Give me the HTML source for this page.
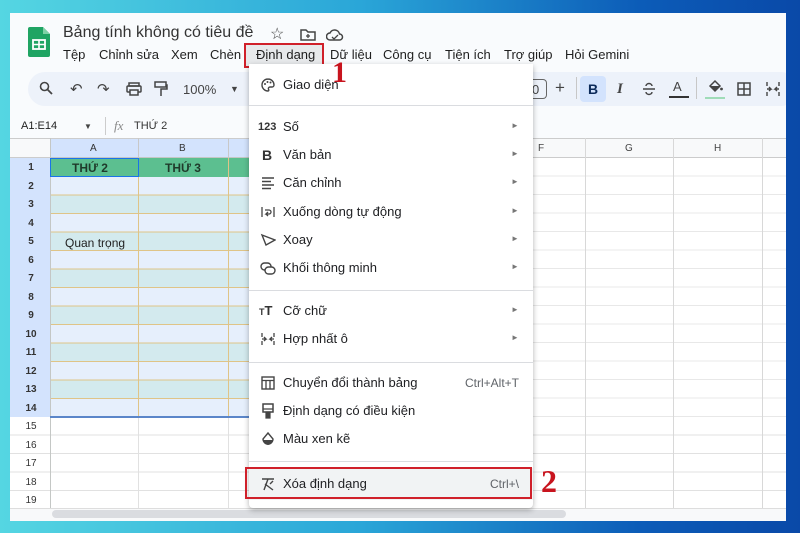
<!DOCTYPE html>
<html><head><meta charset="utf-8"><style>
*{margin:0;padding:0;box-sizing:border-box}
body{width:800px;height:533px;overflow:hidden;position:relative;font-family:"Liberation Sans",Arial,sans-serif;background:linear-gradient(90deg,#55d6e2 0%,#2aa6d8 45%,#0c5cb8 80%,#0a49a8 100%)}
.win{position:absolute;left:10px;top:13px;width:776px;height:508px;background:#f9fbfd;overflow:hidden}
.a{position:absolute}
.t{position:absolute;white-space:nowrap;color:#202124}
.mi{position:absolute;left:0;width:284px;height:28px;font-size:13px;color:#202124}
.mi .ic{position:absolute;left:11px;top:6px;width:16px;height:16px}
.mi .lb{position:absolute;left:34px;top:6px}
.mi .ar{position:absolute;left:262px;top:8px;font-size:8px;color:#777}
.mi .sc{position:absolute;right:14px;top:7px;font-size:12px;color:#5f6368}
.sep{position:absolute;left:0;width:284px;height:1px;background:#dadce0}
.rh{position:absolute;left:2px;width:38px;font-size:10px;font-weight:bold;text-align:center;color:#333}
</style></head><body>
<div class="win">
<svg class="a" style="left:18px;top:14px" width="22" height="30" viewBox="0 0 22 30"><path d="M2 0h13l7 7v21a2 2 0 0 1-2 2H2a2 2 0 0 1-2-2V2a2 2 0 0 1 2-2z" fill="#1fa463"/><path d="M15 0v7h7z" fill="#7fd1a6"/><rect x="5" y="13" width="12" height="9" fill="none" stroke="#fff" stroke-width="1.8"/><path d="M5 17.5h12M11 13v9" stroke="#fff" stroke-width="1.6"/></svg>
<div class="t" style="left:53px;top:11px;font-size:16px;color:#333">Bảng tính không có tiêu đề</div>
<div class="t" style="left:260px;top:11px;font-size:16px;color:#444">☆</div>
<svg class="a" style="left:290px;top:15px" width="16" height="13"><path d="M1 2h5l2 2h7v8H1z" fill="none" stroke="#444" stroke-width="1.5"/><path d="M8 6v4M6 8h4" stroke="#444" stroke-width="1.3"/></svg>
<svg class="a" style="left:316px;top:15px" width="18" height="13"><path d="M4 12a3.5 3.5 0 0 1 0-7 5 5 0 0 1 9.5 1 3 3 0 0 1 0 6z" fill="none" stroke="#444" stroke-width="1.5"/><path d="M6 9l2 2 4-4" fill="none" stroke="#444" stroke-width="1.3"/></svg>
<div class="t" style="left:53px;top:34px;font-size:13px;color:#1f1f1f">
<span class="a" style="left:0">Tệp</span><span class="a" style="left:36px">Chỉnh sửa</span><span class="a" style="left:108px">Xem</span><span class="a" style="left:147px">Chèn</span><span class="a" style="left:193px">Định dạng</span><span class="a" style="left:267px">Dữ liệu</span><span class="a" style="left:320px">Công cụ</span><span class="a" style="left:382px">Tiện ích</span><span class="a" style="left:441px">Trợ giúp</span><span class="a" style="left:502px">Hỏi Gemini</span></div>
<div class="a" style="left:236px;top:31px;width:76px;height:24px;background:rgba(0,0,0,.07)"></div>
<div class="a" style="left:234px;top:30px;width:80px;height:25px;border:2px solid #d0202a"></div>
<div class="a" style="left:18px;top:59px;width:770px;height:34px;border-radius:17px;background:#edf2fa"></div>
<svg class="a" style="left:29px;top:68px" width="14" height="14"><circle cx="5.5" cy="5.5" r="4" fill="none" stroke="#444" stroke-width="1.6"/><path d="M8.5 8.5l4.5 4.5" stroke="#444" stroke-width="1.8"/></svg>
<div class="t" style="left:60px;top:67px;font-size:15px;color:#444">↶</div>
<div class="t" style="left:87px;top:67px;font-size:15px;color:#444">↷</div>
<svg class="a" style="left:116px;top:69px" width="16" height="14"><rect x="3" y="1" width="10" height="3" fill="none" stroke="#444" stroke-width="1.5"/><rect x="1" y="4" width="14" height="6" rx="1" fill="none" stroke="#444" stroke-width="1.5"/><rect x="4" y="8" width="8" height="5" fill="#edf2fa" stroke="#444" stroke-width="1.5"/></svg>
<svg class="a" style="left:144px;top:68px" width="14" height="16"><rect x="1" y="1" width="11" height="5" fill="none" stroke="#444" stroke-width="1.5"/><path d="M12 4h1v4H7v7" fill="none" stroke="#444" stroke-width="1.5"/></svg>
<div class="t" style="left:173px;top:69px;font-size:13px;color:#444">100%</div>
<div class="t" style="left:220px;top:71px;font-size:9px;color:#444">▼</div>
<div class="a" style="left:520px;top:66px;width:17px;height:20px;border:1px solid #666;border-left:none;border-radius:0 4px 4px 0"></div>
<div class="t" style="left:522px;top:69px;font-size:13px;color:#444">0</div>
<div class="t" style="left:545px;top:65px;font-size:17px;color:#444">+</div>
<div class="a" style="left:566px;top:64px;width:1px;height:22px;background:#c7c7c7"></div>
<div class="a" style="left:570px;top:63px;width:26px;height:26px;border-radius:4px;background:#d3e3fd"></div>
<div class="t" style="left:578px;top:68px;font-size:14px;font-weight:bold;color:#0b2a5a">B</div>
<div class="t" style="left:607px;top:68px;font-size:15px;font-style:italic;font-family:'Liberation Serif',serif;font-weight:bold;color:#444">I</div>
<svg class="a" style="left:632px;top:69px" width="14" height="14"><path d="M1 7h12M4 4a3 2.5 0 0 1 6 0M4 10a3 2.5 0 0 0 6 0" fill="none" stroke="#444" stroke-width="1.4"/></svg>
<div class="t" style="left:663px;top:66px;font-size:13px;color:#444">A</div>
<div class="a" style="left:659px;top:83px;width:20px;height:2px;background:#333"></div>
<div class="a" style="left:686px;top:64px;width:1px;height:22px;background:#c7c7c7"></div>
<svg class="a" style="left:697px;top:66px" width="16" height="14"><path d="M3 7l5-5 5 5-5 5z" fill="none" stroke="#444" stroke-width="1.5"/><path d="M3 7h10l-5 5z" fill="#444"/><circle cx="14.5" cy="10" r="1.4" fill="#444"/></svg>
<div class="a" style="left:695px;top:84px;width:20px;height:2px;background:#9fdcb8"></div>
<svg class="a" style="left:727px;top:69px" width="14" height="14"><rect x="1" y="1" width="12" height="12" fill="none" stroke="#444" stroke-width="1.5"/><path d="M7 1v12M1 7h12" stroke="#444" stroke-width="1.5"/></svg>
<svg class="a" style="left:756px;top:68px" width="14" height="16"><path d="M1 1v4M1 11v4M13 1v4M13 11v4M1 8h4l-2-2M5 8l-2 2M13 8h-4l2-2M9 8l2 2" fill="none" stroke="#444" stroke-width="1.4"/></svg>
<div class="t" style="left:11px;top:107px;font-size:11px;color:#1f1f1f">A1:E14</div>
<div class="t" style="left:74px;top:109px;font-size:8px;color:#444">▼</div>
<div class="a" style="left:95px;top:104px;width:1px;height:18px;background:#ccc"></div>
<div class="t" style="left:104px;top:105px;font-size:13px;font-style:italic;font-family:'Liberation Serif',serif;color:#888">fx</div>
<div class="t" style="left:124px;top:107px;font-size:11px;color:#333">THỨ 2</div>
<div class="a" style="left:0;top:125px;width:776px;height:20px;background:#f8f9fa;border-top:1px solid #ccc;border-bottom:1px solid #ccc"></div>
<div class="a" style="left:40px;top:125px;width:445px;height:20px;background:#d3e3fd;border-top:1px solid #ccc;border-bottom:1px solid #c4c7c5"></div>
<div class="a" style="left:0;top:145px;width:40px;height:259px;background:#d3e3fd"></div>
<div class="a" style="left:0;top:404px;width:776px;height:104px;background:#fff;background-image:repeating-linear-gradient(180deg,transparent 0,transparent 17.5px,#e1e1e1 17.5px,#e1e1e1 18.5px)"></div>
<div class="a" style="left:40px;top:145px;width:445px;height:18.5px;background:#5cbf90"></div>
<div class="a" style="left:40px;top:163.5px;width:445px;height:240.5px;background:repeating-linear-gradient(180deg,#e6effc 0,#e6effc 17.5px,#dfc487 17.5px,#dfc487 18.5px,#d3eaee 18.5px,#d3eaee 36px,#dfc487 36px,#dfc487 37px)"></div>
<div class="a" style="left:485px;top:145px;width:291px;height:259px;background:#fff;background-image:repeating-linear-gradient(180deg,transparent 0,transparent 17.5px,#e8e8e8 17.5px,#e8e8e8 18.5px)"></div>
<div class="a" style="left:128px;top:145px;width:1px;height:259px;background:#dfc487"></div>
<div class="a" style="left:218px;top:145px;width:1px;height:259px;background:#dfc487"></div>
<div class="a" style="left:128px;top:125px;width:1px;height:20px;background:#c8c8c8"></div>
<div class="a" style="left:218px;top:125px;width:1px;height:20px;background:#c8c8c8"></div>
<div class="a" style="left:128px;top:404px;width:1px;height:104px;background:#e1e1e1"></div>
<div class="a" style="left:218px;top:404px;width:1px;height:104px;background:#e1e1e1"></div>
<div class="a" style="left:575px;top:125px;width:1px;height:383px;background:#d8d8d8"></div>
<div class="a" style="left:663px;top:125px;width:1px;height:383px;background:#d8d8d8"></div>
<div class="a" style="left:752px;top:125px;width:1px;height:383px;background:#d8d8d8"></div>
<div class="a" style="left:40px;top:125px;width:1px;height:383px;background:#c4c7c5"></div>
<div class="a" style="left:40px;top:145px;width:89px;height:19px;border:1.5px solid #1a73e8"></div>
<div class="a" style="left:40px;top:403px;width:445px;height:1.5px;background:#5b86c9"></div>
<div class="t" style="left:80px;top:130px;font-size:10px;color:#333">A</div>
<div class="t" style="left:169px;top:130px;font-size:10px;color:#333">B</div>
<div class="t" style="left:528px;top:130px;font-size:10px;color:#444">F</div>
<div class="t" style="left:615px;top:130px;font-size:10px;color:#444">G</div>
<div class="t" style="left:704px;top:130px;font-size:10px;color:#444">H</div>
<div class="t" style="left:62px;top:148px;font-size:12px;font-weight:bold;color:#1f3a2a">THỨ 2</div>
<div class="t" style="left:155px;top:148px;font-size:12px;font-weight:bold;color:#1f3a2a">THỨ 3</div>
<div class="t" style="left:55px;top:223px;font-size:12px;color:#222">Quan trọng</div>
<div class="rh" style="top:149px">1</div><div class="rh" style="top:168px">2</div><div class="rh" style="top:186px">3</div><div class="rh" style="top:205px">4</div><div class="rh" style="top:223px">5</div><div class="rh" style="top:242px">6</div><div class="rh" style="top:260px">7</div><div class="rh" style="top:279px">8</div><div class="rh" style="top:297px">9</div><div class="rh" style="top:316px">10</div><div class="rh" style="top:334px">11</div><div class="rh" style="top:353px">12</div><div class="rh" style="top:371px">13</div><div class="rh" style="top:390px">14</div>
<div class="rh" style="top:408px;font-weight:normal">15</div><div class="rh" style="top:427px;font-weight:normal">16</div><div class="rh" style="top:445px;font-weight:normal">17</div><div class="rh" style="top:464px;font-weight:normal">18</div><div class="rh" style="top:482px;font-weight:normal">19</div>
<div class="a" style="left:0;top:495px;width:776px;height:13px;background:#f8f9fa;border-top:1px solid #ddd"></div>
<div class="a" style="left:42px;top:497px;width:514px;height:8px;border-radius:4px;background:#dadce0"></div>
</div>
<div class="a" style="left:249px;top:64px;width:284px;height:444px;background:#fff;border-radius:0 0 4px 4px;box-shadow:0 2px 6px rgba(0,0,0,.3)">
<div class="mi" style="top:7px"><svg class="ic" viewBox="0 0 16 16"><path d="M8 2a6 6 0 1 0 0 12c1 0 1-1 .5-1.7S8.6 10 10 10h2a2 2 0 0 0 2-2c0-3.3-2.7-6-6-6z" fill="none" stroke="#444" stroke-width="1.4"/><circle cx="5" cy="7" r="1" fill="#444"/><circle cx="7.5" cy="5" r="1" fill="#444"/><circle cx="10.5" cy="5.5" r="1" fill="#444"/></svg><span class="lb">Giao diện</span></div>
<div class="sep" style="top:41px"></div>
<div class="mi" style="top:49px"><span class="ic" style="font-size:11px;font-weight:bold;top:8px;left:9px;color:#333">123</span><span class="lb">Số</span><span class="ar">►</span></div>
<div class="mi" style="top:77px"><span class="ic" style="font-size:14px;font-weight:bold;left:13px;color:#333">B</span><span class="lb">Văn bản</span><span class="ar">►</span></div>
<div class="mi" style="top:105px"><svg class="ic" viewBox="0 0 16 16"><path d="M2 3h12M2 6.5h9M2 10h12M2 13.5h9" stroke="#444" stroke-width="1.4"/></svg><span class="lb">Căn chỉnh</span><span class="ar">►</span></div>
<div class="mi" style="top:134px"><svg class="ic" viewBox="0 0 16 16"><path d="M2 3v10M14 3v10M5 6h4a2 2 0 0 1 0 4H6l2-2M6 10l2 2" fill="none" stroke="#444" stroke-width="1.3"/></svg><span class="lb">Xuống dòng tự động</span><span class="ar">►</span></div>
<div class="mi" style="top:162px"><svg class="ic" viewBox="0 0 16 16"><path d="M2 3l13 5-9 5z" fill="none" stroke="#444" stroke-width="1.4"/></svg><span class="lb">Xoay</span><span class="ar">►</span></div>
<div class="mi" style="top:190px"><svg class="ic" viewBox="0 0 16 16"><rect x="1" y="3" width="10" height="7" rx="3.5" fill="none" stroke="#444" stroke-width="1.4"/><rect x="5" y="7" width="10" height="7" rx="3.5" fill="#fff" stroke="#444" stroke-width="1.4"/></svg><span class="lb">Khối thông minh</span><span class="ar">►</span></div>
<div class="sep" style="top:226px"></div>
<div class="mi" style="top:233px"><span class="ic" style="font-size:13px;font-weight:bold;left:10px;color:#333"><small style="font-size:9px">T</small>T</span><span class="lb">Cỡ chữ</span><span class="ar">►</span></div>
<div class="mi" style="top:261px"><svg class="ic" viewBox="0 0 16 16"><path d="M2 2v4M2 10v4M14 2v4M14 10v4M2 8h4l-2-2M6 8l-2 2M14 8h-4l2-2M10 8l2 2" fill="none" stroke="#444" stroke-width="1.3"/></svg><span class="lb">Hợp nhất ô</span><span class="ar">►</span></div>
<div class="sep" style="top:298px"></div>
<div class="mi" style="top:305px"><svg class="ic" viewBox="0 0 16 16"><rect x="2" y="2" width="12" height="12" fill="none" stroke="#444" stroke-width="1.4"/><path d="M2 5.5h12M6 5.5v8.5M10 5.5v8.5" stroke="#444" stroke-width="1.3"/></svg><span class="lb">Chuyển đổi thành bảng</span><span class="sc">Ctrl+Alt+T</span></div>
<div class="mi" style="top:333px"><svg class="ic" viewBox="0 0 16 16"><rect x="3" y="1" width="10" height="8" fill="none" stroke="#444" stroke-width="1.5"/><path d="M3 6h10M6 9h4v6H6z" fill="#444" stroke="#444" stroke-width="1.2"/></svg><span class="lb">Định dạng có điều kiện</span></div>
<div class="mi" style="top:361px"><svg class="ic" viewBox="0 0 16 16"><path d="M8 2l5 6a5 5 0 1 1-10 0z" fill="none" stroke="#444" stroke-width="1.4"/><path d="M3 9h10a5 5 0 0 1-10 0z" fill="#444"/></svg><span class="lb">Màu xen kẽ</span></div>
<div class="sep" style="top:397px"></div>
<div class="a" style="left:0;top:404px;width:284px;height:32px;background:#f1f3f4"></div>
<div class="mi" style="top:406px"><svg class="ic" viewBox="0 0 16 16"><path d="M2 3h12M8 3L4 14M5 8l8 6M10 8l3-3" fill="none" stroke="#444" stroke-width="1.4"/></svg><span class="lb">Xóa định dạng</span><span class="sc">Ctrl+\</span></div>
</div>
<div class="a" style="left:245px;top:467px;width:287px;height:32px;border:2.5px solid #d0202a"></div>
<div class="t" style="left:332px;top:56px;font-size:30px;font-weight:bold;font-family:'Liberation Serif',serif;color:#c8141e">1</div>
<div class="t" style="left:541px;top:463px;font-size:32px;font-weight:bold;font-family:'Liberation Serif',serif;color:#c8141e">2</div>
</body></html>
